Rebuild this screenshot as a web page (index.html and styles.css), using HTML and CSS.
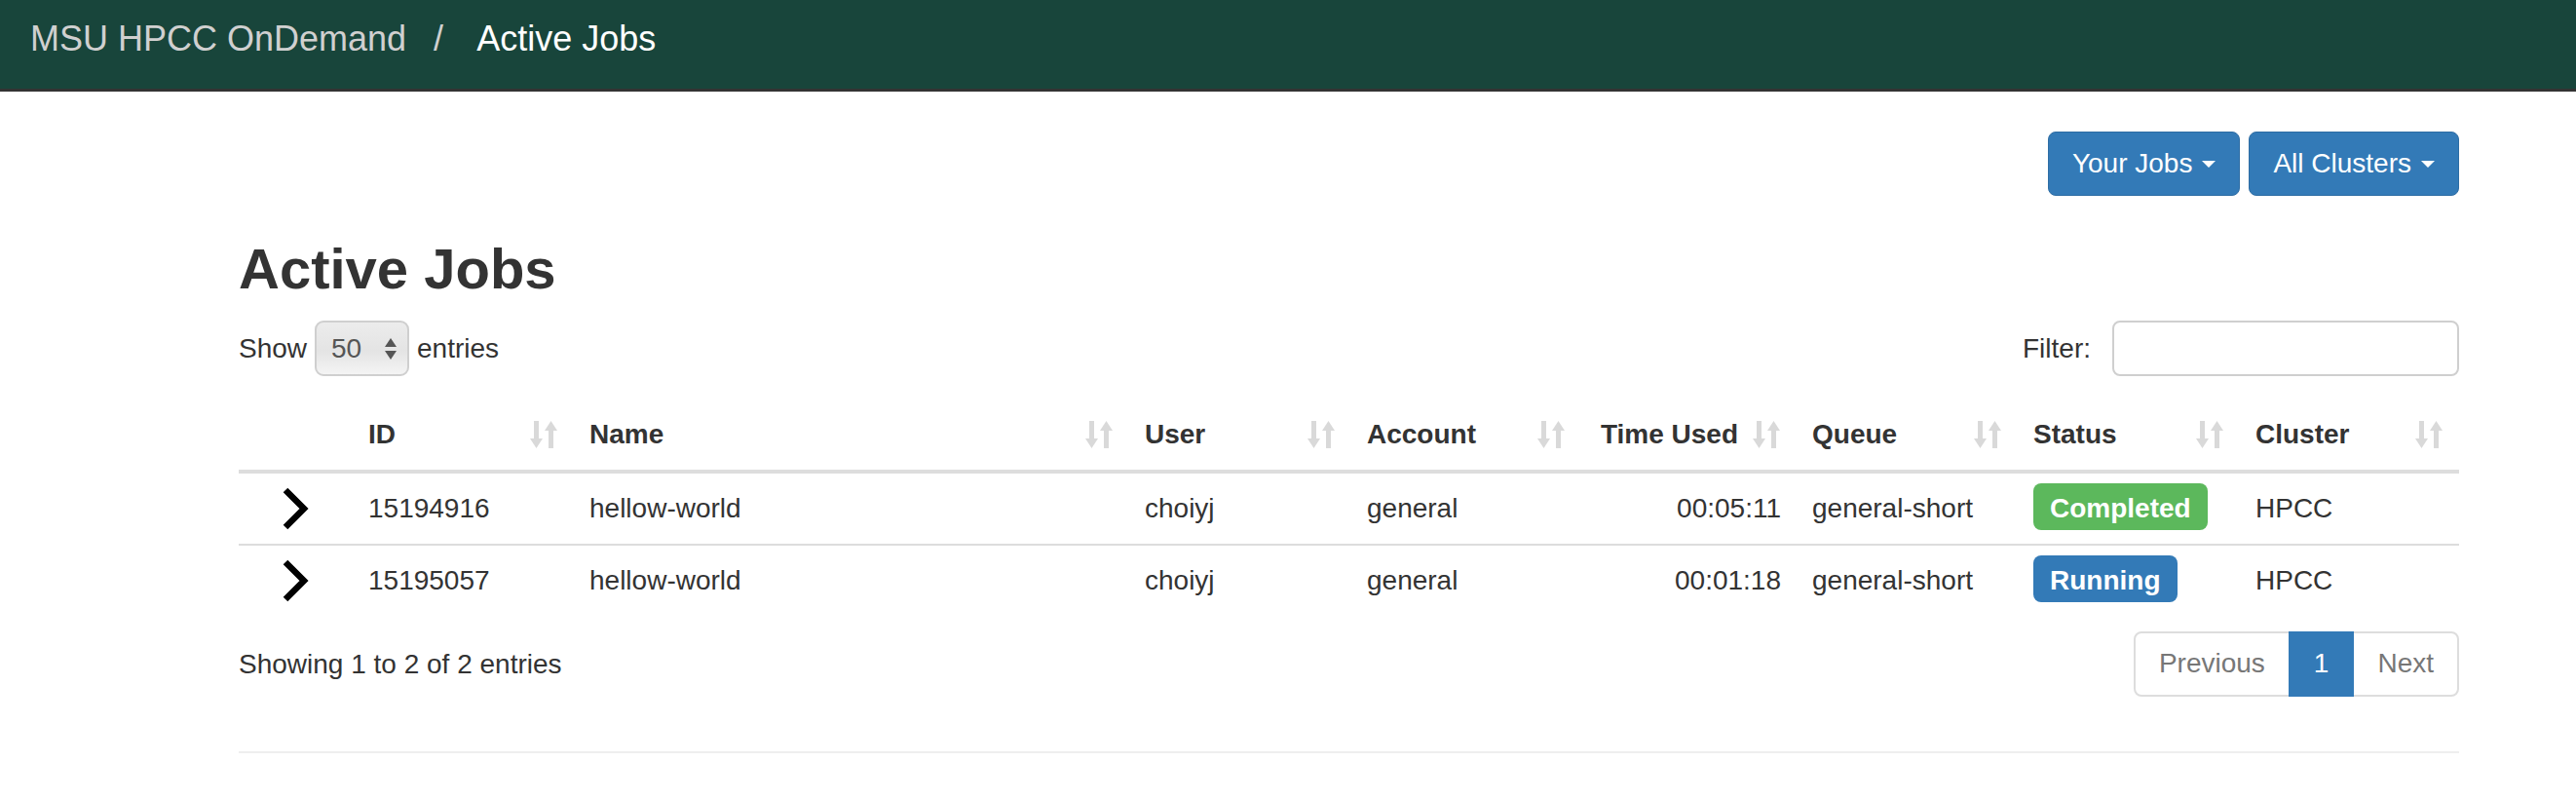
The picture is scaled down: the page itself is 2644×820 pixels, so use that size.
FILE: index.html
```html
<!DOCTYPE html>
<html lang="en">
<head>
<meta charset="utf-8">
<title>Active Jobs</title>
<link rel="stylesheet" href="styles.css">
</head>
<body>
<nav class="navbar">
  <span class="brand">MSU HPCC OnDemand</span>
  <span class="sep">/</span>
  <span class="current">Active Jobs</span>
</nav>

<main class="page">
  <div class="toolbar">
    <button class="btn" type="button">Your Jobs<span class="caret"></span></button>
    <button class="btn" type="button">All Clusters<span class="caret"></span></button>
  </div>

  <h1 class="title">Active Jobs</h1>

  <div class="dt-top">
    <div class="length">
      <span>Show</span>
      <div class="select">
        <span class="select-value">50</span>
        <svg class="select-arrows" width="12" height="22" viewBox="0 0 12 22"><polygon points="6,0 12,9 0,9" fill="#555"/><polygon points="0,13 12,13 6,22" fill="#555"/></svg>
      </div>
      <span>entries</span>
    </div>
    <div class="filter">
      <span>Filter:</span>
      <div class="filter-input"></div>
    </div>
  </div>

  <table class="jobs">
    <colgroup>
      <col class="c-toggle"><col class="c-id"><col class="c-name"><col class="c-user"><col class="c-account"><col class="c-time"><col class="c-queue"><col class="c-status"><col class="c-cluster">
    </colgroup>
    <thead>
      <tr>
        <th class="th-toggle"></th>
        <th>ID<svg class="sort" viewBox="0 0 28 28"><rect x="4" y="0" width="5" height="20"/><polygon points="0,18 13,18 6.5,28"/><polygon points="15,10 28,10 21.5,0"/><rect x="19" y="8" width="5" height="20"/></svg></th>
        <th>Name<svg class="sort" viewBox="0 0 28 28"><rect x="4" y="0" width="5" height="20"/><polygon points="0,18 13,18 6.5,28"/><polygon points="15,10 28,10 21.5,0"/><rect x="19" y="8" width="5" height="20"/></svg></th>
        <th>User<svg class="sort" viewBox="0 0 28 28"><rect x="4" y="0" width="5" height="20"/><polygon points="0,18 13,18 6.5,28"/><polygon points="15,10 28,10 21.5,0"/><rect x="19" y="8" width="5" height="20"/></svg></th>
        <th>Account<svg class="sort" viewBox="0 0 28 28"><rect x="4" y="0" width="5" height="20"/><polygon points="0,18 13,18 6.5,28"/><polygon points="15,10 28,10 21.5,0"/><rect x="19" y="8" width="5" height="20"/></svg></th>
        <th class="right">Time Used<svg class="sort" viewBox="0 0 28 28"><rect x="4" y="0" width="5" height="20"/><polygon points="0,18 13,18 6.5,28"/><polygon points="15,10 28,10 21.5,0"/><rect x="19" y="8" width="5" height="20"/></svg></th>
        <th>Queue<svg class="sort" viewBox="0 0 28 28"><rect x="4" y="0" width="5" height="20"/><polygon points="0,18 13,18 6.5,28"/><polygon points="15,10 28,10 21.5,0"/><rect x="19" y="8" width="5" height="20"/></svg></th>
        <th>Status<svg class="sort" viewBox="0 0 28 28"><rect x="4" y="0" width="5" height="20"/><polygon points="0,18 13,18 6.5,28"/><polygon points="15,10 28,10 21.5,0"/><rect x="19" y="8" width="5" height="20"/></svg></th>
        <th>Cluster<svg class="sort" viewBox="0 0 28 28"><rect x="4" y="0" width="5" height="20"/><polygon points="0,18 13,18 6.5,28"/><polygon points="15,10 28,10 21.5,0"/><rect x="19" y="8" width="5" height="20"/></svg></th>
      </tr>
    </thead>
    <tbody>
      <tr>
        <td class="toggle"><svg class="chevron" width="28" height="44" viewBox="0 0 28 44"><polyline points="3,3 22,22 3,41" fill="none" stroke="#000" stroke-width="6.5"/></svg></td>
        <td>15194916</td>
        <td>hellow-world</td>
        <td>choiyj</td>
        <td>general</td>
        <td class="right">00:05:11</td>
        <td>general-short</td>
        <td><span class="label label-success">Completed</span></td>
        <td>HPCC</td>
      </tr>
      <tr>
        <td class="toggle"><svg class="chevron" width="28" height="44" viewBox="0 0 28 44"><polyline points="3,3 22,22 3,41" fill="none" stroke="#000" stroke-width="6.5"/></svg></td>
        <td>15195057</td>
        <td>hellow-world</td>
        <td>choiyj</td>
        <td>general</td>
        <td class="right">00:01:18</td>
        <td>general-short</td>
        <td><span class="label label-primary">Running</span></td>
        <td>HPCC</td>
      </tr>
    </tbody>
  </table>

  <div class="dt-bottom">
    <div class="info">Showing 1 to 2 of 2 entries</div>
    <ul class="pagination">
      <li class="disabled"><span>Previous</span></li>
      <li class="active"><span>1</span></li>
      <li class="disabled"><span>Next</span></li>
    </ul>
  </div>

  <hr class="rule">
</main>
</body>
</html>
```

FILE: styles.css
```css
* { box-sizing: border-box; }

html, body {
  margin: 0;
  padding: 0;
  background: #fff;
}

body {
  font-family: "Liberation Sans", Arial, Helvetica, sans-serif;
  font-size: 28px;
  line-height: 40px;
  color: #333;
}

/* ---------- navbar ---------- */
.navbar {
  height: 94px;
  background: #18453b;
  border-bottom: 3px solid #333;
  padding: 20px 0 0 31px;
  display: flex;
  align-items: flex-start;
  font-size: 36px;
  line-height: 40px;
}
.navbar .brand { color: #d0d0d0; }
.navbar .sep { color: #d0d0d0; margin: 0 34px 0 28px; }
.navbar .current { color: #fff; }

/* ---------- page ---------- */
.page {
  width: 2279px;
  margin-left: 245px;
}

.toolbar {
  display: flex;
  justify-content: flex-end;
  gap: 9px;
  margin-top: 41px;
}

.btn {
  display: flex;
  align-items: center;
  background: #337ab7;
  border: 1px solid #2e6da4;
  border-radius: 8px;
  color: #fff;
  font-family: inherit;
  font-size: 28px;
  line-height: 40px;
  padding: 12px 24px;
  margin: 0;
}

.caret {
  width: 0;
  height: 0;
  border-top: 7px solid #fff;
  border-left: 7px solid transparent;
  border-right: 7px solid transparent;
  margin-left: 10px;
}

.title {
  font-size: 58px;
  line-height: 64px;
  font-weight: bold;
  margin: 43px 0 0;
  color: #333;
}

/* ---------- datatable controls ---------- */
.dt-top {
  display: flex;
  justify-content: space-between;
  align-items: center;
  margin-top: 21px;
  height: 57px;
}

.length {
  display: flex;
  align-items: center;
  gap: 8px;
}

.select {
  width: 97px;
  height: 57px;
  border: 2px solid #cfcfcf;
  border-radius: 9px;
  background: linear-gradient(#ececec, #e4e4e4 55%, #f4f4f4);
  display: flex;
  align-items: center;
  justify-content: space-between;
  padding: 0 11px 0 15px;
  color: #555;
}

.select-arrows { display: block; }

.filter {
  display: flex;
  align-items: center;
  gap: 22px;
}

.filter-input {
  width: 356px;
  height: 57px;
  border: 2px solid #cfcfcf;
  border-radius: 8px;
  background: #fff;
}

/* ---------- table ---------- */
.jobs {
  width: 2279px;
  table-layout: fixed;
  border-collapse: separate;
  border-spacing: 0;
  margin-top: 24px;
}

.c-toggle { width: 117px; }
.c-id { width: 227px; }
.c-name { width: 570px; }
.c-user { width: 228px; }
.c-account { width: 236px; }
.c-time { width: 221px; }
.c-queue { width: 227px; }
.c-status { width: 228px; }
.c-cluster { width: 225px; }

.jobs th {
  position: relative;
  text-align: left;
  font-weight: bold;
  line-height: 40px;
  padding: 16px 60px 16px 16px;
  border-bottom: 4px solid #ddd;
  white-space: nowrap;
}

.jobs th.th-toggle { padding: 16px; }

.jobs .sort {
  position: absolute;
  right: 17px;
  bottom: 22px;
  width: 28px;
  height: 28px;
  fill: #d9d9d9;
}

.jobs td {
  padding: 16px;
  line-height: 40px;
  vertical-align: middle;
  white-space: nowrap;
}

.jobs tbody tr + tr td { border-top: 2px solid #ddd; }

.jobs .right { text-align: right; }

.jobs td.toggle { padding: 0; }
.chevron { display: block; margin: 0 auto; }

.label {
  display: inline;
  color: #fff;
  font-weight: bold;
  padding: 10px 17px 7px;
  border-radius: 8px;
}
.label-success { background: #5cb85c; }
.label-primary { background: #337ab7; }

/* ---------- footer of table ---------- */
.dt-bottom {
  display: flex;
  justify-content: space-between;
  align-items: center;
  margin-top: 16px;
}

.pagination {
  display: flex;
  list-style: none;
  margin: 0;
  padding: 0;
}

.pagination li span {
  display: block;
  padding: 11px 24px 12px;
  line-height: 40px;
  border: 2px solid #ddd;
  margin-left: -2px;
  color: #777;
  background: #fff;
}

.pagination li:first-child span {
  margin-left: 0;
  border-radius: 8px 0 0 8px;
}

.pagination li:last-child span { border-radius: 0 8px 8px 0; }

.pagination li.active span {
  background: #337ab7;
  border-color: #337ab7;
  color: #fff;
  position: relative;
}

.rule {
  border: 0;
  border-top: 2px solid #eee;
  margin: 56px 0 0;
}
```
